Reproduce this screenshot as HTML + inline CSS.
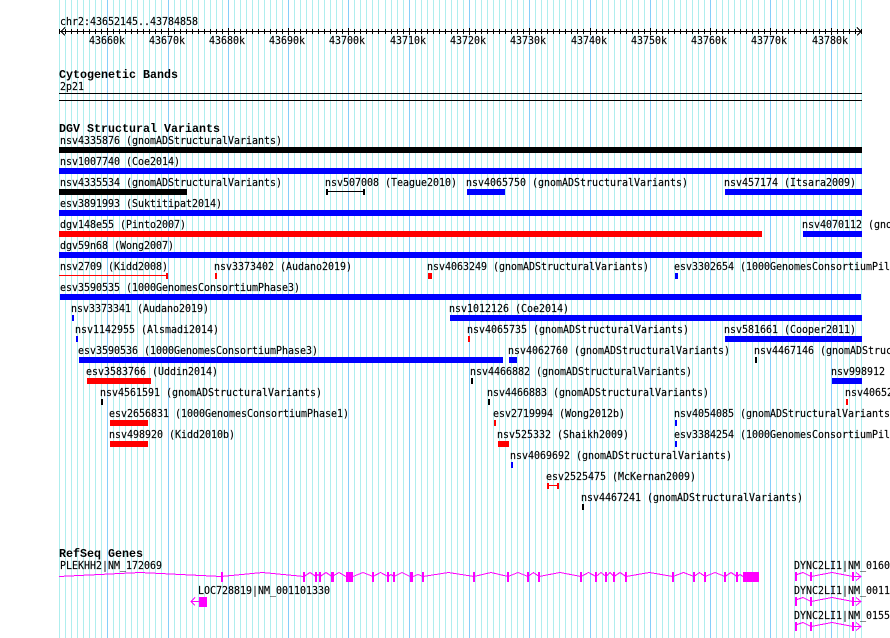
<!DOCTYPE html>
<html><head><meta charset="utf-8"><style>
html,body{margin:0;padding:0;background:#fff;width:890px;height:638px;overflow:hidden}
#w{position:relative;width:890px;height:638px;overflow:hidden}
svg{position:absolute;left:0;top:0}
.r{position:absolute;left:0;height:12px;width:890px}
.r span{position:absolute;top:0;white-space:pre;font:11px/12px "DejaVu Sans Mono",monospace;color:#000;-webkit-text-stroke:.15px #000;transform:scaleX(.906);transform-origin:0 0}
.h{position:absolute;left:59px;white-space:pre;font:bold 12px/12px "Liberation Mono",monospace;color:#000;transform:scaleX(.972);transform-origin:0 0}
</style></head><body><div id="w">
<svg width="890" height="638" viewBox="0 0 890 638" shape-rendering="crispEdges">
<defs><path id="x" d="M59 0h1v1h-1zM65 0h1v1h-1zM71 0h1v1h-1zM77 0h1v1h-1zM83 0h1v1h-1zM89 0h1v1h-1zM95 0h1v1h-1zM101 0h1v1h-1zM107 0h1v1h-1zM113 0h1v1h-1zM119 0h1v1h-1zM125 0h1v1h-1zM131 0h1v1h-1zM137 0h1v1h-1zM143 0h1v1h-1zM149 0h1v1h-1zM155 0h1v1h-1zM161 0h1v1h-1zM168 0h1v1h-1zM174 0h1v1h-1zM180 0h1v1h-1zM186 0h1v1h-1zM192 0h1v1h-1zM198 0h1v1h-1zM204 0h1v1h-1zM210 0h1v1h-1zM216 0h1v1h-1zM222 0h1v1h-1zM228 0h1v1h-1zM234 0h1v1h-1zM240 0h1v1h-1zM246 0h1v1h-1zM252 0h1v1h-1zM258 0h1v1h-1zM264 0h1v1h-1zM270 0h1v1h-1zM276 0h1v1h-1zM282 0h1v1h-1zM288 0h1v1h-1zM294 0h1v1h-1zM300 0h1v1h-1zM306 0h1v1h-1zM312 0h1v1h-1zM318 0h1v1h-1zM324 0h1v1h-1zM330 0h1v1h-1zM336 0h1v1h-1zM342 0h1v1h-1zM348 0h1v1h-1zM354 0h1v1h-1zM360 0h1v1h-1zM366 0h1v1h-1zM372 0h1v1h-1zM378 0h1v1h-1zM385 0h1v1h-1zM391 0h1v1h-1zM397 0h1v1h-1zM403 0h1v1h-1zM409 0h1v1h-1zM415 0h1v1h-1zM421 0h1v1h-1zM427 0h1v1h-1zM433 0h1v1h-1zM439 0h1v1h-1zM445 0h1v1h-1zM451 0h1v1h-1zM457 0h1v1h-1zM463 0h1v1h-1zM469 0h1v1h-1zM475 0h1v1h-1zM481 0h1v1h-1zM487 0h1v1h-1zM493 0h1v1h-1zM499 0h1v1h-1zM505 0h1v1h-1zM511 0h1v1h-1zM517 0h1v1h-1zM523 0h1v1h-1zM529 0h1v1h-1zM535 0h1v1h-1zM541 0h1v1h-1zM547 0h1v1h-1zM553 0h1v1h-1zM559 0h1v1h-1zM565 0h1v1h-1zM571 0h1v1h-1zM577 0h1v1h-1zM583 0h1v1h-1zM590 0h1v1h-1zM596 0h1v1h-1zM602 0h1v1h-1zM608 0h1v1h-1zM614 0h1v1h-1zM620 0h1v1h-1zM626 0h1v1h-1zM632 0h1v1h-1zM638 0h1v1h-1zM644 0h1v1h-1zM650 0h1v1h-1zM656 0h1v1h-1zM662 0h1v1h-1zM668 0h1v1h-1zM674 0h1v1h-1zM680 0h1v1h-1zM686 0h1v1h-1zM692 0h1v1h-1zM698 0h1v1h-1zM704 0h1v1h-1zM710 0h1v1h-1zM716 0h1v1h-1zM722 0h1v1h-1zM728 0h1v1h-1zM734 0h1v1h-1zM740 0h1v1h-1zM746 0h1v1h-1zM752 0h1v1h-1zM758 0h1v1h-1zM764 0h1v1h-1zM770 0h1v1h-1zM776 0h1v1h-1zM782 0h1v1h-1zM788 0h1v1h-1zM794 0h1v1h-1zM800 0h1v1h-1zM806 0h1v1h-1zM813 0h1v1h-1zM819 0h1v1h-1zM825 0h1v1h-1zM831 0h1v1h-1zM837 0h1v1h-1zM843 0h1v1h-1zM849 0h1v1h-1zM855 0h1v1h-1zM861 0h1v1h-1z"/></defs>
<use href="#x" fill="#afeeee" transform="scale(1,638)"/>
<path fill="#87cefa" d="M107 0h1v638h-1zM168 0h1v638h-1zM228 0h1v638h-1zM288 0h1v638h-1zM348 0h1v638h-1zM409 0h1v638h-1zM469 0h1v638h-1zM529 0h1v638h-1zM590 0h1v638h-1zM650 0h1v638h-1zM710 0h1v638h-1zM770 0h1v638h-1zM831 0h1v638h-1z"/>
<use href="#x" fill="#000" transform="translate(0,29) scale(1,5)"/>
<path fill="#000" d="M60 31h801v1h-801zM107 28h1v7h-1zM168 28h1v7h-1zM228 28h1v7h-1zM288 28h1v7h-1zM348 28h1v7h-1zM409 28h1v7h-1zM469 28h1v7h-1zM529 28h1v7h-1zM590 28h1v7h-1zM650 28h1v7h-1zM710 28h1v7h-1zM770 28h1v7h-1zM831 28h1v7h-1zM59 93h803v1h-803zM59 100h803v1h-803z"/>
<path fill="none" stroke="#000" d="M65 27.5L61 31.5L65 35.5M857 27.5L861 31.5L857 35.5"/>
<g fill="#000">
<rect x="59" y="147" width="803" height="6"/>
<rect x="59" y="189" width="128" height="6"/>
<rect x="326" y="189" width="2" height="6"/><rect x="363" y="189" width="2" height="6"/><rect x="326" y="191" width="38" height="1"/>
<rect x="755" y="357" width="2" height="6"/>
<rect x="471" y="378" width="2" height="6"/>
<rect x="101" y="399" width="2" height="6"/>
<rect x="488" y="399" width="2" height="6"/>
<rect x="582" y="504" width="2" height="6"/>
</g>
<g fill="#0000ff">
<rect x="59" y="168" width="803" height="6"/>
<rect x="467" y="189" width="38" height="6"/>
<rect x="725" y="189" width="137" height="6"/>
<rect x="59" y="210" width="803" height="6"/>
<rect x="803" y="231" width="59" height="6"/>
<rect x="59" y="252" width="803" height="6"/>
<rect x="675" y="273" width="3" height="6"/>
<rect x="60" y="294" width="801" height="6"/>
<rect x="72" y="315" width="2" height="6"/>
<rect x="450" y="315" width="412" height="6"/>
<rect x="76" y="336" width="2" height="6"/>
<rect x="725" y="336" width="137" height="6"/>
<rect x="79" y="357" width="424" height="6"/>
<rect x="509" y="357" width="8" height="6"/>
<rect x="832" y="378" width="30" height="6"/>
<rect x="675" y="420" width="2" height="6"/>
<rect x="675" y="441" width="2" height="6"/>
<rect x="511" y="462" width="2" height="6"/>
</g>
<g fill="#ff0000">
<rect x="59" y="231" width="703" height="6"/>
<rect x="59" y="275" width="108" height="1"/><rect x="166" y="273" width="2" height="6"/>
<rect x="215" y="273" width="2" height="6"/>
<rect x="428" y="273" width="4" height="6"/>
<rect x="468" y="336" width="2" height="6"/>
<rect x="87" y="378" width="64" height="6"/>
<rect x="846" y="399" width="2" height="6"/>
<rect x="110" y="420" width="38" height="6"/>
<rect x="494" y="420" width="2" height="6"/>
<rect x="110" y="441" width="38" height="6"/>
<rect x="498" y="441" width="11" height="6"/>
<rect x="547" y="483" width="2" height="6"/><rect x="557" y="483" width="2" height="6"/><rect x="547" y="485" width="12" height="1"/>
</g>
<g fill="none" stroke="#ff00ff">
<polyline points="59,576.5 140,572.5 221,576.5 262.5,572.5 304,576.5 310,572.5 316,576.5 318,574.5 320,576.5 326,572.5 332,576.5 339,572.5 346,576.5 353,576.5 363,572.5 373,576.5 380.5,572.5 388,576.5 391,574.5 394,576.5 402,572.5 410,576.5 413,576.5 418,574.5 423,576.5 448.5,572.5 474,576.5 491,572.5 508,576.5 518,572.5 528,576.5 533.5,572.5 539,576.5 560,572.5 581,576.5 588.5,572.5 596,576.5 601,572.5 606,576.5 610,572.5 614,576.5 620,572.5 626,576.5 649.5,572.5 673,576.5 683.5,572.5 694,576.5 699.5,572.5 705,576.5 715,572.5 725,576.5 731,572.5 737,576.5 740,574.5 743,576.5"/>
<path d="M191 601.5H199M195 597.5L191 601.5L195 605.5"/>
<path d="M797 574.5L803 572.5L811 576.5L832 572.5L853 576.5H861M856 572.5L861 576.5L856 580.5"/>
<path d="M797 599.5L803 597.5L811 601.5L832 597.5L853 601.5H861M856 597.5L861 601.5L856 605.5"/>
<path d="M797 624.5L803 622.5L811 626.5L832 622.5L853 626.5H861M856 622.5L861 626.5L856 630.5"/>
</g>
<path fill="#ff00ff" d="M221 572h2v10h-2zM303 572h2v10h-2zM315 572h2v10h-2zM319 572h2v10h-2zM331 572h3v10h-3zM346 572h7v10h-7zM372 572h2v10h-2zM387 572h2v10h-2zM393 572h2v10h-2zM410 572h3v10h-3zM422 572h2v10h-2zM473 572h2v10h-2zM507 572h2v10h-2zM527 572h2v10h-2zM538 572h2v10h-2zM580 572h2v10h-2zM595 572h2v10h-2zM605 572h2v10h-2zM613 572h2v10h-2zM625 572h2v10h-2zM672 572h2v10h-2zM693 572h2v10h-2zM704 572h2v10h-2zM724 572h2v10h-2zM736 572h2v10h-2zM743 572h16v10h-16zM199 597h8v10h-8zM795 572h2v9h-2zM810 572h2v9h-2zM852 572h2v9h-2zM795 597h2v9h-2zM810 597h2v9h-2zM852 597h2v9h-2zM795 622h2v9h-2zM810 622h2v9h-2zM852 622h2v9h-2z"/>
</svg>
<div class="r" style="top:16px"><span style="left:60px">chr2:43652145..43784858</span></div>
<div class="r" style="top:35px"><span style="left:89px">43660k</span><span style="left:149px">43670k</span><span style="left:209px">43680k</span><span style="left:269px">43690k</span><span style="left:329px">43700k</span><span style="left:390px">43710k</span><span style="left:450px">43720k</span><span style="left:510px">43730k</span><span style="left:571px">43740k</span><span style="left:631px">43750k</span><span style="left:691px">43760k</span><span style="left:751px">43770k</span><span style="left:812px">43780k</span></div>
<div class="h" style="top:69px">Cytogenetic Bands</div>
<div class="r" style="top:81px"><span style="left:60px">2p21</span></div>
<div class="h" style="top:123px">DGV Structural Variants</div>
<div class="r" style="top:135px"><span style="left:60px">nsv4335876 (gnomADStructuralVariants)</span></div>
<div class="r" style="top:156px"><span style="left:60px">nsv1007740 (Coe2014)</span></div>
<div class="r" style="top:177px"><span style="left:60px">nsv4335534 (gnomADStructuralVariants)</span><span style="left:325px">nsv507008 (Teague2010)</span><span style="left:466px">nsv4065750 (gnomADStructuralVariants)</span><span style="left:724px">nsv457174 (Itsara2009)</span></div>
<div class="r" style="top:198px"><span style="left:60px">esv3891993 (Suktitipat2014)</span></div>
<div class="r" style="top:219px"><span style="left:60px">dgv148e55 (Pinto2007)</span><span style="left:802px">nsv4070112 (gnomADStructuralVariants)</span></div>
<div class="r" style="top:240px"><span style="left:60px">dgv59n68 (Wong2007)</span></div>
<div class="r" style="top:261px"><span style="left:60px">nsv2709 (Kidd2008)</span><span style="left:214px">nsv3373402 (Audano2019)</span><span style="left:427px">nsv4063249 (gnomADStructuralVariants)</span><span style="left:674px">esv3302654 (1000GenomesConsortiumPilotProject)</span></div>
<div class="r" style="top:282px"><span style="left:60px">esv3590535 (1000GenomesConsortiumPhase3)</span></div>
<div class="r" style="top:303px"><span style="left:71px">nsv3373341 (Audano2019)</span><span style="left:449px">nsv1012126 (Coe2014)</span></div>
<div class="r" style="top:324px"><span style="left:75px">nsv1142955 (Alsmadi2014)</span><span style="left:467px">nsv4065735 (gnomADStructuralVariants)</span><span style="left:724px">nsv581661 (Cooper2011)</span></div>
<div class="r" style="top:345px"><span style="left:78px">esv3590536 (1000GenomesConsortiumPhase3)</span><span style="left:508px">nsv4062760 (gnomADStructuralVariants)</span><span style="left:754px">nsv4467146 (gnomADStructuralVariants)</span></div>
<div class="r" style="top:366px"><span style="left:86px">esv3583766 (Uddin2014)</span><span style="left:470px">nsv4466882 (gnomADStructuralVariants)</span><span style="left:831px">nsv998912 (gnomADStructuralVariants)</span></div>
<div class="r" style="top:387px"><span style="left:100px">nsv4561591 (gnomADStructuralVariants)</span><span style="left:487px">nsv4466883 (gnomADStructuralVariants)</span><span style="left:845px">nsv4065283 (gnomADStructuralVariants)</span></div>
<div class="r" style="top:408px"><span style="left:109px">esv2656831 (1000GenomesConsortiumPhase1)</span><span style="left:493px">esv2719994 (Wong2012b)</span><span style="left:674px">nsv4054085 (gnomADStructuralVariants)</span></div>
<div class="r" style="top:429px"><span style="left:109px">nsv498920 (Kidd2010b)</span><span style="left:497px">nsv525332 (Shaikh2009)</span><span style="left:674px">esv3384254 (1000GenomesConsortiumPilotProject)</span></div>
<div class="r" style="top:450px"><span style="left:510px">nsv4069692 (gnomADStructuralVariants)</span></div>
<div class="r" style="top:471px"><span style="left:546px">esv2525475 (McKernan2009)</span></div>
<div class="r" style="top:492px"><span style="left:581px">nsv4467241 (gnomADStructuralVariants)</span></div>
<div class="h" style="top:548px">RefSeq Genes</div>
<div class="r" style="top:560px"><span style="left:60px">PLEKHH2|NM_172069</span><span style="left:794px">DYNC2LI1|NM_016008</span></div>
<div class="r" style="top:585px"><span style="left:198px">LOC728819|NM_001101330</span><span style="left:794px">DYNC2LI1|NM_001193464</span></div>
<div class="r" style="top:610px"><span style="left:794px">DYNC2LI1|NM_015522</span></div>
</div></body></html>
